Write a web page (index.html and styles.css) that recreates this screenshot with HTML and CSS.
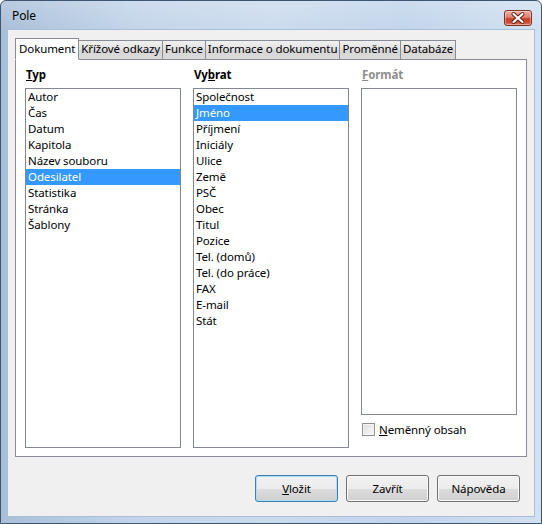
FILE: index.html
```html
<!DOCTYPE html>
<html lang="cs">
<head>
<meta charset="utf-8">
<title>Pole</title>
<link rel="stylesheet" href="styles.css">
</head>
<body>
<div class="window">
  <div class="titlebar">
    <span class="title">Pole</span>
    <div class="close">
      <svg width="26" height="14" viewBox="0 0 26 14">
        <path d="M8.5 3 L17.5 11 M17.5 3 L8.5 11" stroke="#5a1e16" stroke-width="4" stroke-linecap="round"/>
        <path d="M8.5 3 L17.5 11 M17.5 3 L8.5 11" stroke="#ffffff" stroke-width="2.2" stroke-linecap="round"/>
      </svg>
    </div>
  </div>
  <div class="client">
    <div class="tabs">
      <div class="tab active">Dokument</div>
      <div class="tab">Křížové odkazy</div>
      <div class="tab">Funkce</div>
      <div class="tab">Informace o dokumentu</div>
      <div class="tab">Proměnné</div>
      <div class="tab">Databáze</div>
    </div>
    <div class="panel">
      <div class="col">
        <div class="label"><u>T</u>yp</div>
        <div class="list">
          <div class="item">Autor</div>
          <div class="item">Čas</div>
          <div class="item">Datum</div>
          <div class="item">Kapitola</div>
          <div class="item">Název souboru</div>
          <div class="item selected">Odesilatel</div>
          <div class="item">Statistika</div>
          <div class="item">Stránka</div>
          <div class="item">Šablony</div>
        </div>
      </div>
      <div class="col">
        <div class="label">Vy<u>b</u>rat</div>
        <div class="list">
          <div class="item">Společnost</div>
          <div class="item selected">Jméno</div>
          <div class="item">Příjmení</div>
          <div class="item">Iniciály</div>
          <div class="item">Ulice</div>
          <div class="item">Země</div>
          <div class="item">PSČ</div>
          <div class="item">Obec</div>
          <div class="item">Titul</div>
          <div class="item">Pozice</div>
          <div class="item">Tel. (domů)</div>
          <div class="item">Tel. (do práce)</div>
          <div class="item">FAX</div>
          <div class="item">E-mail</div>
          <div class="item">Stát</div>
        </div>
      </div>
      <div class="col">
        <div class="label disabled"><u>F</u>ormát</div>
        <div class="list"></div>
        <div class="check"><span class="box"></span><span><u>N</u>eměnný obsah</span></div>
      </div>
    </div>
    <div class="buttons">
      <button class="btn default"><u>V</u>ložit</button>
      <button class="btn">Zavřít</button>
      <button class="btn">Nápověda</button>
    </div>
  </div>
</div>
</body>
</html>
```
FILE: styles.css
```css
html, body {
  margin: 0;
  padding: 0;
  background: #ffffff;
}
body {
  font-family: "Noto Sans", "Open Sans", sans-serif;
  font-size: 11.5px;
  letter-spacing: -0.1px;
  color: #000;
}
.window {
  width: 542px;
  height: 524px;
  box-sizing: border-box;
  border: 1px solid #3e566f;
  border-radius: 6px 6px 0 0;
  background:
    linear-gradient(to bottom, rgba(255,255,255,0.18), rgba(255,255,255,0) 30px),
    linear-gradient(to right, #a9bfd8 0%, #c3d5ea 25%, #cbdbee 50%, #c2d5ec 75%, #d1e0f1 100%);
  display: flex;
  flex-direction: column;
}
.titlebar {
  height: 29px;
  display: flex;
  align-items: flex-start;
  justify-content: space-between;
}
.title {
  margin: 7px 0 0 11px;
  line-height: 16px;
  font-size: 12px;
}
.close {
  margin: 9px 9px 0 0;
  width: 26px;
  height: 14px;
  border: 1px solid #7e3327;
  border-radius: 3px;
  background: linear-gradient(to bottom, #ebb2a4 0%, #dc7f6c 45%, #c8412b 55%, #cd4a31 80%, #e07a60 100%);
  box-shadow: inset 0 0 0 1px rgba(255,255,255,0.35);
}
.close svg {
  display: block;
}
.client {
  margin: 0 7px 7px;
  height: 486px;
  background: #f0f0f0;
  box-shadow: 0 0 0 1px #a9bfd9;
  padding: 8px 7px 0;
  box-sizing: border-box;
  display: flex;
  flex-direction: column;
}
.tabs {
  display: flex;
  align-items: flex-end;
  margin-bottom: -1px;
  position: relative;
  z-index: 1;
  height: 22px;
}
.tab {
  border: 1px solid #898c95;
  height: 16px;
  line-height: 16px;
  padding: 0 2px 2px;
  margin-left: -1px;
  background: linear-gradient(to bottom, #f0f0f0, #e1e1e1 50%, #d6d6d6 51%, #dadada);
  white-space: nowrap;
}
.tab.active {
  margin-left: 0;
  padding: 2px 3px 2px 3px;
  background: #ffffff;
  border-bottom-color: #ffffff;
  position: relative;
  z-index: 2;
}
.panel {
  height: 398px;
  box-sizing: border-box;
  border: 1px solid #898c95;
  background: #ffffff;
  padding: 7px 9px 8px;
  display: grid;
  grid-template-columns: 156px 156px 156px;
  column-gap: 12px;
}
.col {
  display: flex;
  flex-direction: column;
  min-height: 0;
}
.label {
  height: 16px;
  line-height: 16px;
  font-weight: bold;
  margin: 0 0 5px 1px;
}
.label.disabled {
  color: #8d8d8d;
}
.list {
  flex: 1;
  border: 1px solid #828790;
  background: #fff;
}
.item {
  height: 16px;
  line-height: 16px;
  padding-left: 2px;
  white-space: nowrap;
}
.item.selected {
  background: #3399ff;
  color: #ffffff;
}
.check {
  display: flex;
  align-items: center;
  height: 13px;
  margin: 8px 0 12px 1px;
  line-height: 13px;
}
.box {
  width: 11px;
  height: 11px;
  border: 1px solid #8e8f8f;
  background: linear-gradient(135deg, #dcdcdc, #fbfbfb);
  box-shadow: inset 0 0 0 1px #f4f4f4;
  margin-right: 4px;
}
.buttons {
  display: flex;
  justify-content: flex-end;
  gap: 8px;
  margin-top: 18px;
  padding-right: 7px;
}
.btn {
  width: 83px;
  height: 27px;
  font-family: inherit;
  font-size: 11.5px;
  letter-spacing: -0.1px;
  color: #000;
  border: 1px solid #707070;
  border-radius: 3px;
  background: linear-gradient(to bottom, #f2f2f2 0%, #ebebeb 50%, #dddddd 51%, #cfcfcf 100%);
  box-shadow: inset 0 0 0 1px #fafafa;
  padding: 0;
}
.btn.default {
  border-color: #3c7fb1;
  box-shadow: inset 0 0 0 1px #a9def5;
}
```
